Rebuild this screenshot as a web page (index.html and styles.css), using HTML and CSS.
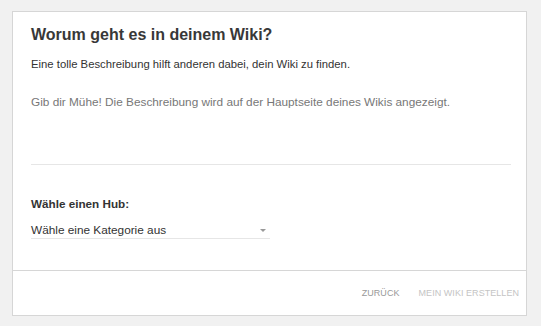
FILE: index.html
```html
<!DOCTYPE html>
<html>
<head>
    <title>Wiki erstellen</title>
    <link rel="stylesheet" href="styles.css">
</head>
<body>
    <div class="wiki-card">
        <div class="card-body">
            <h1 class="card-title">Worum geht es in deinem Wiki?</h1>
            <p class="lead-text">Eine tolle Beschreibung hilft anderen dabei, dein Wiki zu finden.</p>
            <div class="description-field">Gib dir Mühe! Die Beschreibung wird auf der Hauptseite deines Wikis angezeigt.</div>

            <div class="hub-label">Wähle einen Hub:</div>
            <div class="hub-select">
                <span>Wähle eine Kategorie aus</span>
                <span class="select-arrow"></span>
            </div>
        </div>
        <div class="card-footer">
            <button class="flat-button">Zurück</button>
            <button class="flat-button disabled">Mein Wiki erstellen</button>
        </div>
    </div>
</body>
</html>
```

FILE: styles.css
```css
body {
    margin: 0;
    padding: 11px 14px 10px 12px;
    background: #f1f1f1;
    font-family: Arial, "Liberation Sans", sans-serif;
    color: #333;
}
.wiki-card {
    background: white;
    border: 1px solid #d6d6d6;
    height: 303px;
    display: flex;
    flex-direction: column;
}
.card-body {
    flex: 1;
    padding: 12px 15px 0 18px;
}
.card-title {
    font-size: 16px;
    font-weight: bold;
    color: #383838;
    margin: 0;
    line-height: 22px;
}
.lead-text {
    font-size: 11.3px;
    margin: 10px 0 0 0;
    line-height: 16px;
    color: #333;
}
.description-field {
    font-size: 11.8px;
    color: #777;
    line-height: 16px;
    padding-top: 22px;
    height: 70px;
    border-bottom: 1px solid #e6e6e6;
}
.hub-label {
    font-size: 11.7px;
    font-weight: bold;
    margin-top: 31px;
    line-height: 16px;
}
.hub-select {
    width: 239px;
    margin-top: 10px;
    font-size: 11.8px;
    line-height: 16px;
    border-bottom: 1px solid #e6e6e6;
    display: flex;
    justify-content: space-between;
    align-items: center;
}
.select-arrow {
    width: 0;
    height: 0;
    border-left: 3px solid transparent;
    border-right: 3px solid transparent;
    border-top: 3px solid #999;
    margin-right: 4px;
}
.card-footer {
    border-top: 1px solid #d6d6d6;
    height: 44px;
    display: flex;
    justify-content: flex-end;
    align-items: center;
    padding-right: 7px;
    gap: 19px;
}
.flat-button {
    background: none;
    border: none;
    font-family: inherit;
    font-size: 9px;
    letter-spacing: 0.05px;
    text-transform: uppercase;
    color: #999;
    padding: 0;
}
.flat-button.disabled {
    color: #c4c4c4;
}
```
